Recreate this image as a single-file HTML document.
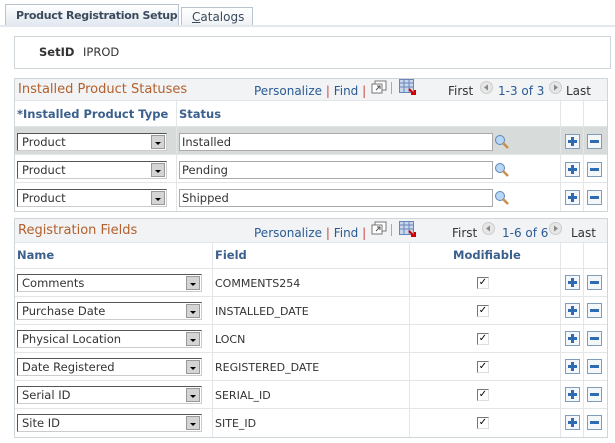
<!DOCTYPE html><html><head><style>
*{box-sizing:border-box;margin:0;padding:0}
body{width:615px;height:443px;background:#fff;font-family:"DejaVu Sans",Verdana,sans-serif;font-size:11px;color:#333;position:relative;overflow:hidden}
.a{position:absolute;white-space:nowrap}
.tab1{left:5px;top:4px;width:174px;height:22px;background:linear-gradient(#fff,#dfe7ef);border:1px solid #b8c4cf;border-bottom:none;font-weight:bold;color:#3b4a5c;font-size:11px;letter-spacing:-0.3px;padding:4px 0 0 10px}
.tab2{left:181px;top:7px;width:72px;height:19px;background:linear-gradient(#fff,#eef1f4);border:1px solid #b8c4cf;border-bottom:none;color:#3b4a5c;font-size:12px;padding:2px 0 0 10px}
.tl{left:0;top:25px;width:615px;height:2px;background:#e3e8ee}
.box{border:1px solid #cfd6da}
.hdr{background:#f1f3f4;border-bottom:1px solid #e2e6e8}
.ttl{color:#b4602c;font-size:13px}
.lnk{color:#2a5a93;font-size:12px}
.ch{color:#3b608c;font-weight:bold;font-size:11.5px}
.sel{height:18px;border:1px solid #555;border-right-color:#ccc;border-bottom-color:#ccc;background:#fff;padding:1px 4px;font-size:11.5px}
.sel b{position:absolute;right:1px;top:1px;width:14px;height:14px;background:#d4d4d4;border:1px solid #999}
.sel b:after{content:"";position:absolute;left:3px;top:6px;border:3px solid transparent;border-top:3px solid #000}
.inp{height:18px;border:1px solid #aaa;background:#fff;padding:1px 2px;font-size:11.5px}
.btn{width:15px;height:15px;border:1px solid #7f9db9;background:#f4f7fa}
.btn:before{content:"";position:absolute;left:2px;top:5px;width:9px;height:3px;background:#2f6bb0}
.plus:after{content:"";position:absolute;left:5px;top:2px;width:3px;height:9px;background:#2f6bb0}
.vl{width:1px;background:#e2e6e8}
.hl{height:1px;background:#e2e6e8}
.cb{width:12px;height:12px;border:1px solid #777;border-right-color:#ddd;border-bottom-color:#ddd;background:#fff;font-size:10px;line-height:10px;text-align:center;color:#000}
</style></head><body>
<div class="a tab1">Product Registration Setup</div>
<div class="a tab2"><u>C</u>atalogs</div>
<div class="a tl"></div>
<div class="a box" style="left:14px;top:36px;width:597px;height:33px"></div>
<div class="a" style="left:39px;top:45px;font-weight:bold;font-size:11.5px">SetID</div>
<div class="a" style="left:83px;top:45px;font-size:11.5px">IPROD</div>

<!-- grid 1 -->
<div class="a box" style="left:14px;top:78px;width:594px;height:134px"></div>
<div class="a hdr" style="left:15px;top:79px;width:592px;height:22px"></div>
<div class="a ttl" style="left:18px;top:82px">Installed Product Statuses</div>
<div class="a lnk" style="left:254px;top:84px">Personalize <span style="color:#c44">|</span> Find <span style="color:#c44">|</span></div>
<svg class="a" style="left:371px;top:80px" width="16" height="14"><rect x="4" y="1" width="11" height="9" fill="#fff" stroke="#777"/><rect x="1" y="4" width="10" height="9" fill="#fff" stroke="#777"/><path d="M5 10l4-4M6 6h3v3" stroke="#555" fill="none"/></svg>
<div class="a" style="left:391px;top:82px;width:1px;height:12px;background:#c8b040"></div>
<svg class="a" style="left:399px;top:79px" width="17" height="16"><rect x="0.5" y="0.5" width="14" height="13" fill="#c9d7ec" stroke="#6a86b8"/><path d="M0 4h15M0 8h15M5 0v14M10 0v14" stroke="#6a86b8"/><path d="M10 10l5 5M12 15h4v-4" stroke="#c00" stroke-width="2" fill="none"/></svg>
<div class="a" style="left:448px;top:84px;font-size:12px;color:#333">First</div>
<svg class="a" style="left:480px;top:81px" width="13" height="13"><circle cx="6.5" cy="6.5" r="6" fill="#e6e6e6" stroke="#ccc"/><path d="M8 3.5v6l-4-3z" fill="#888"/></svg>
<div class="a" style="left:498px;top:84px;color:#2a5a93;font-size:12px">1-3 of 3</div>
<svg class="a" style="left:549px;top:81px" width="13" height="13"><circle cx="6.5" cy="6.5" r="6" fill="#e6e6e6" stroke="#ccc"/><path d="M5 3.5v6l4-3z" fill="#888"/></svg>
<div class="a" style="left:566px;top:84px;font-size:12px">Last</div>
<div class="a ch" style="left:17px;top:107px">*Installed Product Type</div>
<div class="a ch" style="left:179px;top:107px">Status</div>
<div class="a hl" style="left:15px;top:126px;width:592px"></div>
<div class="a" style="left:15px;top:127px;width:592px;height:27px;background:#d7dbda"></div>
<div class="a hl" style="left:15px;top:154px;width:592px"></div>
<div class="a hl" style="left:15px;top:182px;width:592px"></div>
<div class="a vl" style="left:176px;top:101px;height:110px"></div>
<div class="a vl" style="left:560px;top:101px;height:110px"></div>
<div class="a vl" style="left:583px;top:101px;height:110px"></div>

<div class="a sel" style="left:17px;top:133px;width:150px">Product<b></b></div>
<div class="a inp" style="left:179px;top:133px;width:314px">Installed</div>
<div class="a sel" style="left:17px;top:161px;width:150px">Product<b></b></div>
<div class="a inp" style="left:179px;top:161px;width:314px">Pending</div>
<div class="a sel" style="left:17px;top:189px;width:150px">Product<b></b></div>
<div class="a inp" style="left:179px;top:189px;width:314px">Shipped</div>

<svg class="a" style="left:494px;top:134px" width="16" height="16"><circle cx="6" cy="6" r="4.5" fill="#b9d6f2" stroke="#5b86b8"/><path d="M9 9l5 5" stroke="#c8904a" stroke-width="2.5"/></svg>
<svg class="a" style="left:494px;top:162px" width="16" height="16"><circle cx="6" cy="6" r="4.5" fill="#b9d6f2" stroke="#5b86b8"/><path d="M9 9l5 5" stroke="#c8904a" stroke-width="2.5"/></svg>
<svg class="a" style="left:494px;top:190px" width="16" height="16"><circle cx="6" cy="6" r="4.5" fill="#b9d6f2" stroke="#5b86b8"/><path d="M9 9l5 5" stroke="#c8904a" stroke-width="2.5"/></svg>

<div class="a btn plus" style="left:565px;top:134px"></div><div class="a btn" style="left:587px;top:134px"></div>
<div class="a btn plus" style="left:565px;top:162px"></div><div class="a btn" style="left:587px;top:162px"></div>
<div class="a btn plus" style="left:565px;top:190px"></div><div class="a btn" style="left:587px;top:190px"></div>

<!-- grid 2 -->
<div class="a box" style="left:14px;top:218px;width:594px;height:220px"></div>
<div class="a hdr" style="left:15px;top:219px;width:592px;height:24px"></div>
<div class="a ttl" style="left:18px;top:223px">Registration Fields</div>
<div class="a lnk" style="left:254px;top:226px">Personalize <span style="color:#c44">|</span> Find <span style="color:#c44">|</span></div>
<svg class="a" style="left:371px;top:221px" width="16" height="14"><rect x="4" y="1" width="11" height="9" fill="#fff" stroke="#777"/><rect x="1" y="4" width="10" height="9" fill="#fff" stroke="#777"/><path d="M5 10l4-4M6 6h3v3" stroke="#555" fill="none"/></svg>
<div class="a" style="left:391px;top:224px;width:1px;height:12px;background:#c8b040"></div>
<svg class="a" style="left:399px;top:221px" width="17" height="16"><rect x="0.5" y="0.5" width="14" height="13" fill="#c9d7ec" stroke="#6a86b8"/><path d="M0 4h15M0 8h15M5 0v14M10 0v14" stroke="#6a86b8"/><path d="M10 10l5 5M12 15h4v-4" stroke="#c00" stroke-width="2" fill="none"/></svg>
<div class="a" style="left:452px;top:226px;font-size:12px">First</div>
<svg class="a" style="left:482px;top:222px" width="13" height="13"><circle cx="6.5" cy="6.5" r="6" fill="#e6e6e6" stroke="#ccc"/><path d="M8 3.5v6l-4-3z" fill="#888"/></svg>
<div class="a" style="left:502px;top:226px;color:#2a5a93;font-size:12px">1-6 of 6</div>
<svg class="a" style="left:549px;top:222px" width="13" height="13"><circle cx="6.5" cy="6.5" r="6" fill="#e6e6e6" stroke="#ccc"/><path d="M5 3.5v6l4-3z" fill="#888"/></svg>
<div class="a" style="left:571px;top:226px;font-size:12px">Last</div>
<div class="a ch" style="left:17px;top:248px">Name</div>
<div class="a ch" style="left:215px;top:248px">Field</div>
<div class="a ch" style="left:453px;top:248px">Modifiable</div>
<div class="a vl" style="left:212px;top:243px;height:194px"></div>
<div class="a vl" style="left:409px;top:243px;height:194px"></div>
<div class="a vl" style="left:560px;top:243px;height:194px"></div>
<div class="a vl" style="left:583px;top:243px;height:194px"></div>
<div class="a hl" style="left:15px;top:268px;width:592px"></div>
<div class="a hl" style="left:15px;top:296px;width:592px"></div>
<div class="a hl" style="left:15px;top:324px;width:592px"></div>
<div class="a hl" style="left:15px;top:352px;width:592px"></div>
<div class="a hl" style="left:15px;top:380px;width:592px"></div>
<div class="a hl" style="left:15px;top:408px;width:592px"></div>

<div class="a sel" style="left:17px;top:274px;width:185px">Comments<b></b></div>
<div class="a" style="left:215px;top:277px">COMMENTS254</div>
<div class="a sel" style="left:17px;top:302px;width:185px">Purchase Date<b></b></div>
<div class="a" style="left:215px;top:305px">INSTALLED_DATE</div>
<div class="a sel" style="left:17px;top:330px;width:185px">Physical Location<b></b></div>
<div class="a" style="left:215px;top:333px">LOCN</div>
<div class="a sel" style="left:17px;top:358px;width:185px">Date Registered<b></b></div>
<div class="a" style="left:215px;top:361px">REGISTERED_DATE</div>
<div class="a sel" style="left:17px;top:386px;width:185px">Serial ID<b></b></div>
<div class="a" style="left:215px;top:389px">SERIAL_ID</div>
<div class="a sel" style="left:17px;top:414px;width:185px">Site ID<b></b></div>
<div class="a" style="left:215px;top:417px">SITE_ID</div>

<div class="a cb" style="left:477px;top:277px">✓</div>
<div class="a cb" style="left:477px;top:305px">✓</div>
<div class="a cb" style="left:477px;top:333px">✓</div>
<div class="a cb" style="left:477px;top:361px">✓</div>
<div class="a cb" style="left:477px;top:389px">✓</div>
<div class="a cb" style="left:477px;top:417px">✓</div>

<div class="a btn plus" style="left:565px;top:275px"></div><div class="a btn" style="left:587px;top:275px"></div>
<div class="a btn plus" style="left:565px;top:303px"></div><div class="a btn" style="left:587px;top:303px"></div>
<div class="a btn plus" style="left:565px;top:331px"></div><div class="a btn" style="left:587px;top:331px"></div>
<div class="a btn plus" style="left:565px;top:359px"></div><div class="a btn" style="left:587px;top:359px"></div>
<div class="a btn plus" style="left:565px;top:387px"></div><div class="a btn" style="left:587px;top:387px"></div>
<div class="a btn plus" style="left:565px;top:415px"></div><div class="a btn" style="left:587px;top:415px"></div>
</body></html>
